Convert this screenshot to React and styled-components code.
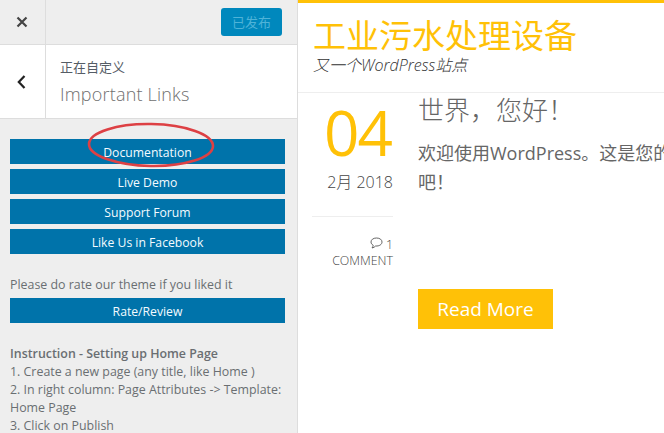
import React from 'react';
import styled, { createGlobalStyle } from 'styled-components';

const GlobalStyle = createGlobalStyle`
  html, body {
    margin: 0;
    padding: 0;
    background: #fff;
    overflow: hidden;
  }
  * {
    box-sizing: border-box;
  }
`;

const FONT = '"Open Sans", "Noto Sans CJK SC", sans-serif';

const Page = styled.div`
  display: flex;
  width: 664px;
  height: 433px;
  overflow: hidden;
  font-family: ${FONT};
`;

const Sidebar = styled.aside`
  position: relative;
  flex: 0 0 298px;
  height: 433px;
  overflow: hidden;
  background: #eeeeee;
  border-right: 1px solid #dddddd;
`;

const TopBar = styled.div`
  display: flex;
  align-items: center;
  justify-content: space-between;
  height: 45px;
  border-bottom: 1px solid #dddddd;
  padding-right: 15px;
`;

const CloseCell = styled.div`
  display: flex;
  align-items: center;
  justify-content: center;
  width: 46px;
  height: 44px;
  padding-right: 2px;
  border-right: 1px solid #dddddd;
  color: #444;
`;

const PublishButton = styled.div`
  width: 61px;
  height: 28px;
  margin-top: -1px;
  border-radius: 3px;
  background: #0088bd;
  color: #4fb3d8;
  font-size: 13px;
  line-height: 28px;
  text-align: center;
`;

const SectionHeader = styled.div`
  display: flex;
  height: 74px;
  background: #fff;
  border-bottom: 1px solid #dddddd;
`;

const BackCell = styled.div`
  display: flex;
  align-items: center;
  justify-content: center;
  width: 46px;
  padding-right: 2px;
  border-right: 1px solid #dddddd;
  color: #222;
`;

const HeaderText = styled.div`
  padding: 13px 0 0 14px;
`;

const Customizing = styled.div`
  font-size: 13px;
  line-height: 19px;
  color: #555d66;
`;

const SectionTitle = styled.div`
  margin-top: 5px;
  font-size: 18px;
  font-weight: 300;
  line-height: 24px;
  letter-spacing: 0.2px;
  color: #6f6f6f;
`;

const SectionBody = styled.div`
  padding: 20px 12px 0 10px;
`;

const LinkList = styled.div`
  display: flex;
  flex-direction: column;
  gap: 5px;
`;

const LinkButton = styled.div`
  height: 25px;
  background: #0073aa;
  color: #f4fbff;
  font-size: 12.2px;
  font-weight: 500;
  line-height: 27px;
  text-align: center;
`;

const RateText = styled.p`
  margin: 22px 0 4px;
  font-size: 12.4px;
  line-height: 18px;
  color: #6a6e72;
`;

const Instructions = styled.div`
  margin-top: 22px;
  font-size: 12.4px;
  line-height: 18px;
  color: #6a6e72;
  white-space: nowrap;
`;

const InstructionTitle = styled.div`
  font-weight: 600;
`;

const Highlight = styled.svg`
  position: absolute;
  left: 84px;
  top: 120px;
  pointer-events: none;
`;

const Preview = styled.main`
  flex: 1;
  min-width: 0;
  border-top: 3px solid #ffc107;
  background: #fff;
`;

const SiteHeader = styled.header`
  height: 90px;
  padding: 15px 0 0 15px;
  border-bottom: 1px solid #eeeeee;
`;

const SiteTitle = styled.div`
  font-size: 33px;
  line-height: 36px;
  color: #ffc107;
`;

const Tagline = styled.div`
  font-size: 16px;
  font-style: italic;
  font-weight: 300;
  line-height: 22px;
  color: #333;
`;

const Post = styled.article`
  display: flex;
  padding-left: 14px;
`;

const DateColumn = styled.div`
  flex: 0 0 81px;
  text-align: right;
`;

const Day = styled.div`
  margin-top: 3px;
  padding-right: 2px;
  font-size: 62px;
  font-weight: 400;
  line-height: 72px;
  letter-spacing: -2px;
  color: #ffc107;
`;

const MonthYear = styled.div`
  margin-top: 4px;
  padding-bottom: 24px;
  border-bottom: 1px solid #eeeeee;
  font-size: 16px;
  font-weight: 300;
  line-height: 20px;
  color: #444;
`;

const Comments = styled.div`
  margin-top: 20px;
  font-size: 12.4px;
  font-weight: 300;
  line-height: 16px;
  color: #444;
`;

const PostBody = styled.div`
  flex: 1;
  min-width: 0;
  padding-left: 25px;
  white-space: nowrap;
  overflow: hidden;
`;

const PostTitle = styled.h2`
  margin: 0;
  font-size: 26px;
  font-weight: 300;
  line-height: 34px;
  color: #666;
`;

const PostText = styled.p`
  margin: 12px 0 0;
  font-size: 18px;
  line-height: 29px;
  color: #666;
`;

const ReadMore = styled.div`
  width: 135px;
  height: 40px;
  margin-top: 92px;
  background: #ffc107;
  color: #fff;
  font-size: 19px;
  line-height: 40px;
  text-align: center;
`;

const links = ['Documentation', 'Live Demo', 'Support Forum', 'Like Us in Facebook'];

const App = () => (
  <Page>
    <GlobalStyle />
    <Sidebar>
      <TopBar>
        <CloseCell>
          <svg width="12" height="12" viewBox="0 0 12 12">
            <path d="M1.5 1.5 L10.5 10.5 M10.5 1.5 L1.5 10.5" stroke="currentColor" strokeWidth="2.2" fill="none" />
          </svg>
        </CloseCell>
        <PublishButton>已发布</PublishButton>
      </TopBar>
      <SectionHeader>
        <BackCell>
          <svg width="9" height="14" viewBox="0 0 9 14">
            <path d="M7.5 1 L1.8 7 L7.5 13" stroke="currentColor" strokeWidth="2.2" fill="none" />
          </svg>
        </BackCell>
        <HeaderText>
          <Customizing>正在自定义</Customizing>
          <SectionTitle>Important Links</SectionTitle>
        </HeaderText>
      </SectionHeader>
      <SectionBody>
        <LinkList>
          {links.map(label => (
            <LinkButton key={label}>{label}</LinkButton>
          ))}
        </LinkList>
        <RateText>Please do rate our theme if you liked it</RateText>
        <LinkButton>Rate/Review</LinkButton>
        <Instructions>
          <InstructionTitle>Instruction - Setting up Home Page</InstructionTitle>
          <div>1. Create a new page (any title, like Home )</div>
          <div>2. In right column: Page Attributes -&gt; Template:</div>
          <div>Home Page</div>
          <div>3. Click on Publish</div>
        </Instructions>
      </SectionBody>
      <Highlight width="134" height="52" viewBox="0 0 134 52">
        <ellipse cx="67" cy="25" rx="62" ry="21" stroke="#dd4044" strokeWidth="2.6" fill="none" transform="rotate(1 67 25)" />
      </Highlight>
    </Sidebar>
    <Preview>
      <SiteHeader>
        <SiteTitle>工业污水处理设备</SiteTitle>
        <Tagline>又一个WordPress站点</Tagline>
      </SiteHeader>
      <Post>
        <DateColumn>
          <Day>04</Day>
          <MonthYear>2月 2018</MonthYear>
          <Comments>
            <svg width="13" height="12" viewBox="0 0 13 12">
              <path d="M6.5 1 C3.2 1 1 2.7 1 5 C1 6.4 1.9 7.5 3.2 8.2 C3.1 9.3 2.6 10.2 2 11 C3.5 10.7 4.8 10 5.6 9 C9.4 9.3 12 7.4 12 5 C12 2.7 9.8 1 6.5 1 Z" stroke="#555" strokeWidth="0.9" fill="none" />
            </svg>{' '}
            1
            <br />
            COMMENT
          </Comments>
        </DateColumn>
        <PostBody>
          <PostTitle>世界，您好！</PostTitle>
          <PostText>
            欢迎使用WordPress。这是您的第一篇文章。
            <br />
            吧！
          </PostText>
          <ReadMore>Read More</ReadMore>
        </PostBody>
      </Post>
    </Preview>
  </Page>
);

export default App;
